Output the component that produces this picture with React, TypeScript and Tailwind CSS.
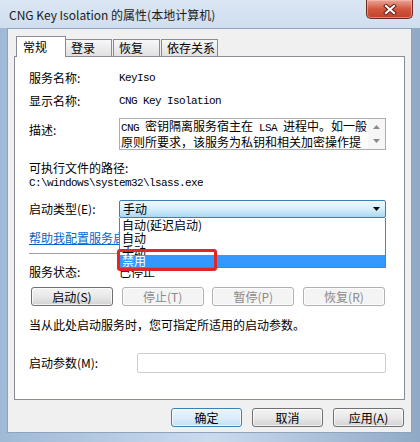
import React from 'react'

const cjk = "font-['Noto_Sans_CJK_SC','Noto_Sans',sans-serif]"
const mono = "font-['Liberation_Mono',monospace] text-[11px] tracking-[-0.6px]"

function Mono({ children }: { children: React.ReactNode }) {
  return <span className={mono}>{children}</span>
}

interface BtnProps {
  label: string
  w: string
  disabled?: boolean
  primary?: boolean
}

function Btn({ label, w, disabled, primary }: BtnProps) {
  let look = 'border-[#707070] bg-linear-to-b from-[#f3f3f3] via-[#e9e9e9] to-[#d2d2d2] text-black'
  if (disabled) look = 'border-[#adb2b5] bg-[#f4f4f4] text-[#8a8a8a]'
  if (primary) look = 'border-[#3c7fb1] bg-linear-to-b from-[#eaf5fc] via-[#dcedf9] to-[#c2e0f4] text-black'
  return (
    <div
      className={`${w} h-[19px] rounded-[3px] border ${look} shadow-[inset_0_0_0_1px_rgba(255,255,255,0.7)] flex items-center justify-center text-[12px] leading-[14px] ${cjk}`}
    >
      {label}
    </div>
  )
}

export default function App() {
  return (
    <div className="w-[420px] h-[442px] flex flex-col overflow-hidden bg-linear-to-r from-[#9fb9d6] via-[#cbdbee] to-[#8fa9c6]">
      {/* title bar */}
      <div className="h-[28px] shrink-0 flex items-start bg-linear-to-b from-[#dbe6f3] to-[#cfdeef]">
        <div className={`pl-[9px] pt-[7px] text-[12px] leading-[16px] text-[#1b1b1b] ${cjk}`}>
          CNG Key Isolation 的属性(本地计算机)
        </div>
        <div className="ml-auto mr-[7px] w-[47px] h-[19px] rounded-b-[5px] border border-t-0 border-[#6e2a22] bg-linear-to-b from-[#e9a596] via-[#d2573f] to-[#c23f28] shadow-[inset_0_0_0_1px_rgba(255,200,190,0.5)] flex items-center justify-center">
          <svg width="14" height="11" viewBox="0 0 14 11">
            <path d="M3 2 L11 9 M11 2 L3 9" stroke="#5a1a12" strokeWidth="4" strokeLinecap="square" />
            <path d="M3 2 L11 9 M11 2 L3 9" stroke="#ffffff" strokeWidth="2.2" strokeLinecap="square" />
          </svg>
        </div>
      </div>

      <div className="flex">
        <div className="w-[7px]" />
        {/* client area */}
        <div className="w-[405px] h-[405px] bg-[#f0f0f0] border border-[#8ea4bd] flex flex-col">
          {/* tabs */}
          <div className={`relative z-10 flex items-end h-[21px] mt-[7px] -mb-[1px] pl-[8px] text-[12px] ${cjk}`}>
            <div className="w-[50px] h-[21px] bg-white border border-b-0 border-[#898c95] pl-[6px] pt-[2px] leading-[16px] text-black">
              常规
            </div>
            <div className="w-[46px] h-[17px] mb-[1px] border border-b-0 border-l-0 border-[#898c95] bg-linear-to-b from-[#f7f7f7] to-[#e1e1e1] pl-[5px] leading-[16px]">
              登录
            </div>
            <div className="ml-[1px] w-[47px] h-[17px] mb-[1px] border border-b-0 border-[#898c95] bg-linear-to-b from-[#f7f7f7] to-[#e1e1e1] pl-[5px] leading-[16px]">
              恢复
            </div>
            <div className="ml-[1px] w-[57px] h-[17px] mb-[1px] border border-b-0 border-[#898c95] bg-linear-to-b from-[#f7f7f7] to-[#e1e1e1] pl-[5px] leading-[16px]">
              依存关系
            </div>
          </div>

          {/* tab page */}
          <div className={`relative ml-[6px] w-[391px] h-[344px] bg-white border border-[#898c95] pl-[14px] text-[12px] text-black ${cjk}`}>
            <div className="mt-[13px] h-[16px] flex items-center leading-[16px]">
              <div className="w-[90px]">服务名称:</div>
              <Mono>KeyIso</Mono>
            </div>
            <div className="mt-[7px] h-[16px] flex items-center leading-[16px]">
              <div className="w-[90px]">显示名称:</div>
              <Mono>CNG Key Isolation</Mono>
            </div>
            <div className="mt-[9px] flex">
              <div className="w-[90px] pt-[4px] leading-[16px]">描述:</div>
              <div className="w-[267px] h-[32px] border border-[#abadb3] flex">
                <div className="flex-1 pl-[1px] leading-[13px] overflow-hidden whitespace-nowrap">
                  <div>
                    <Mono>CNG </Mono>密钥隔离服务宿主在<Mono> LSA </Mono>进程中。如一般
                  </div>
                  <div>原则所要求，该服务为私钥和相关加密操作提</div>
                </div>
                <div className="w-[17px] bg-[#f6f6f6] flex flex-col items-center justify-between py-[6px]">
                  <svg width="7" height="4" viewBox="0 0 7 4">
                    <path d="M0 4 L3.5 0 L7 4 Z" fill="#8a8a8a" />
                  </svg>
                  <svg width="7" height="4" viewBox="0 0 7 4">
                    <path d="M0 0 L3.5 4 L7 0 Z" fill="#8a8a8a" />
                  </svg>
                </div>
              </div>
            </div>
            <div className="mt-[10px] h-[16px] leading-[16px]">可执行文件的路径:</div>
            <div className="h-[14px] flex items-center">
              <Mono>C:\windows\system32\lsass.exe</Mono>
            </div>

            {/* startup type */}
            <div className="mt-[10px] h-[18px] flex items-center">
              <div className="w-[90px] leading-[16px]">启动类型(E):</div>
              <div className="relative w-[267px] h-[18px]">
                <div className="h-[18px] rounded-[2px] border border-[#3c7fb1] bg-linear-to-b from-[#edf7fd] via-[#d6eefb] to-[#a9d8f3] flex items-center pl-[3px] pr-[5px] leading-[16px]">
                  <span>手动</span>
                  <svg className="ml-auto" width="7" height="4" viewBox="0 0 7 4">
                    <path d="M0 0 L7 0 L3.5 4 Z" fill="#000" />
                  </svg>
                </div>
                <div className="absolute z-20 left-0 top-[18px] w-[267px] h-[50px] bg-white border border-t-0 border-[#7a7a7a] text-[12px] leading-[13px]">
                  <div className="h-[13px] pl-[2px] whitespace-nowrap">自动(延迟启动)</div>
                  <div className="h-[13px] pl-[2px]">自动</div>
                  <div className="h-[13px] pl-[2px]">手动</div>
                  <div className="relative -mt-[2px] h-[12px] bg-[#3399ff] text-white pl-[2px] leading-[12px]">禁用</div>
                  <div className="absolute -left-[3px] top-[31px] w-[100px] h-[22px] rounded-[3px] border-[3px] border-[#e0262b]" />
                </div>
              </div>
            </div>

            <div className="mt-[12px] h-[16px] leading-[16px] text-[#0066cc] underline whitespace-nowrap">
              帮助我配置服务启动选项。
            </div>
            <div className="mt-[7px] w-[357px] h-[2px] border-t border-b border-t-[#a0a0a0] border-b-white" />

            <div className="mt-[9px] h-[16px] flex items-center leading-[16px]">
              <div className="w-[90px]">服务状态:</div>
              <div>已停止</div>
            </div>

            <div className="mt-[7px] ml-[2px] w-[354px] flex justify-between">
              <Btn label="启动(S)" w="w-[82px]" />
              <Btn label="停止(T)" w="w-[82px]" disabled />
              <Btn label="暂停(P)" w="w-[82px]" disabled />
              <Btn label="恢复(R)" w="w-[82px]" disabled />
            </div>

            <div className="mt-[11px] h-[16px] leading-[16px]">当从此处启动服务时，您可指定所适用的启动参数。</div>

            <div className="mt-[20px] h-[20px] flex items-center">
              <div className="w-[108px] leading-[16px]">启动参数(M):</div>
              <div className="w-[249px] h-[20px] rounded-[2px] border border-[#cdcdcd] bg-white" />
            </div>
          </div>

          {/* dialog buttons */}
          <div className="mt-[8px] pr-[7px] flex justify-end gap-[10px]">
            <Btn label="确定" w="w-[71px]" primary />
            <Btn label="取消" w="w-[71px]" />
            <Btn label="应用(A)" w="w-[71px]" />
          </div>
        </div>
      </div>
    </div>
  )
}
